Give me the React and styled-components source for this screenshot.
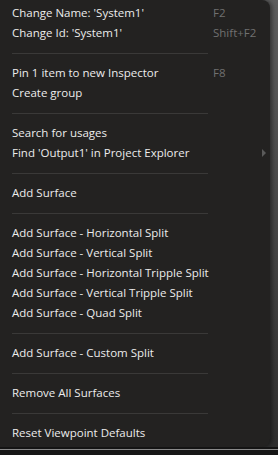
import React from "react";
import styled, { createGlobalStyle } from "styled-components";

const GlobalStyle = createGlobalStyle`
  html, body {
    margin: 0;
    padding: 0;
    background: #3d3d3d;
    height: 100%;
    overflow: hidden;
  }
  #root {
    height: 100%;
  }
`;

const items = [
  [
    { label: "Change Name: 'System1'", shortcut: "F2" },
    { label: "Change Id: 'System1'", shortcut: "Shift+F2" },
  ],
  [
    { label: "Pin 1 item to new Inspector", shortcut: "F8" },
    { label: "Create group" },
  ],
  [
    { label: "Search for usages" },
    { label: "Find 'Output1' in Project Explorer", submenu: true },
  ],
  [{ label: "Add Surface" }],
  [
    { label: "Add Surface - Horizontal Split" },
    { label: "Add Surface - Vertical Split" },
    { label: "Add Surface - Horizontal Tripple Split" },
    { label: "Add Surface - Vertical Tripple Split" },
    { label: "Add Surface - Quad Split" },
  ],
  [{ label: "Add Surface - Custom Split" }],
  [{ label: "Remove All Surfaces" }],
  [{ label: "Reset Viewpoint Defaults" }],
];

const App = () => {
  return (
    <Page>
      <GlobalStyle />
      <Menu>
        {items.map((group, gi) => (
          <React.Fragment key={gi}>
            {gi > 0 && <Separator />}
            {group.map((item) => (
              <Row key={item.label}>
                <Label>{item.label}</Label>
                {item.shortcut && <Shortcut>{item.shortcut}</Shortcut>}
                {item.submenu && (
                  <Arrow viewBox="0 0 5 8">
                    <path d="M0 0 L4 4 L0 8 Z" fill="#5a5a5a" />
                  </Arrow>
                )}
              </Row>
            ))}
          </React.Fragment>
        ))}
      </Menu>
      <Ground />
    </Page>
  );
};

const Page = styled.div`
  height: 100%;
  display: flex;
  flex-direction: column;
  background: linear-gradient(to bottom, #5e5e5e, #2e2e2e);
`;

const Menu = styled.div`
  width: 270px;
  height: 447px;
  box-sizing: border-box;
  padding-top: 3px;
  background: #232221;
  border-radius: 0 8px 8px 0;
  box-shadow: 2px 0 4px rgba(0, 0, 0, 0.45);
  display: flex;
  flex-direction: column;
  font-family: "Open Sans", "Noto Sans", sans-serif;
  font-size: 11.5px;
  color: #ececec;
`;

const Row = styled.div`
  height: 20px;
  display: grid;
  grid-template-columns: 201px 1fr;
  align-items: center;
  padding-left: 12px;
  position: relative;
  white-space: nowrap;
`;

const Label = styled.span`
  line-height: 20px;
`;

const Shortcut = styled.span`
  color: #707070;
  line-height: 20px;
`;

const Arrow = styled.svg`
  position: absolute;
  left: 262px;
  top: 6px;
  width: 5px;
  height: 8px;
`;

const Separator = styled.div`
  height: 1px;
  margin: 10px 0 9px 12px;
  width: 196px;
  background: #3a3938;
`;

const Ground = styled.div`
  flex: 1;
  border-top: 2px solid #141414;
  background: linear-gradient(to bottom, #8a8a8a 0, #8a8a8a 1px, #161616 1px);
`;

export default App;
